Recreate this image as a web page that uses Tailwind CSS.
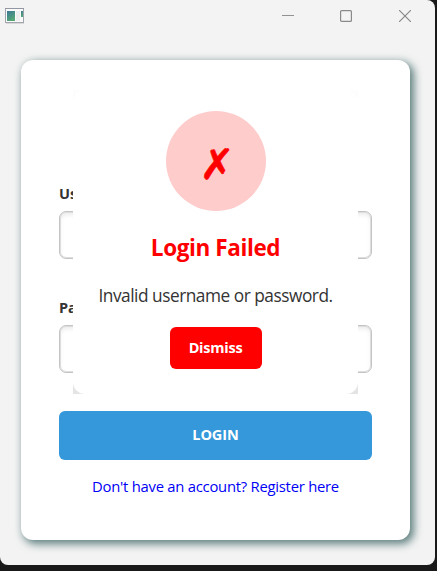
<!DOCTYPE html>
<html lang="en">
<head>
<meta charset="utf-8">
<title>Login</title>
<script src="https://cdn.jsdelivr.net/npm/@tailwindcss/browser@4"></script>
</head>
<body class="w-[437px] h-[571px] overflow-hidden bg-[#191919] font-['Open_Sans','Noto_Sans',sans-serif]">
<div class="w-[435px] h-[565px] rounded-tr-[8px] rounded-b-[8px] bg-[#f3f3f3] overflow-hidden">
  <header class="h-[32px] flex items-center justify-between pl-[5px] pr-[24px]">
    <svg class="w-[19px] h-[16px]" viewBox="0 0 19 16">
      <rect x=".5" y=".5" width="18" height="14" fill="#fafafa" stroke="#a2a5ad"/>
      <path d="M0 .5h19" stroke="#9297a3"/>
      <path d="M1 15.5h18" stroke="#d8d8d8"/>
      <defs><linearGradient id="g" x2=".5" y2="1"><stop stop-color="#3c7898"/><stop offset="1" stop-color="#55a775"/></linearGradient></defs>
      <rect x="2" y="3" width="8" height="10" fill="url(#g)"/>
      <rect x="11" y="3" width="4" height="10" fill="#eeeeee"/>
      <rect x="16" y="3" width="2" height="6" fill="url(#g)"/>
    </svg>
    <div class="flex items-center gap-[46px]">
      <svg class="w-[12px] h-[12px]" viewBox="0 0 12 12"><path d="M0 5.5h12" stroke="#929292"/></svg>
      <svg class="w-[12px] h-[12px] mr-px" viewBox="0 0 12 12"><rect x=".6" y=".6" width="10.8" height="10.8" rx="1" fill="none" stroke="#8a8a8a" stroke-width="1.2"/></svg>
      <svg class="w-[12px] h-[12px]" viewBox="0 0 12 12"><path d="M0 0l12 12M12 0L0 12" stroke="#858585" stroke-width="1.1"/></svg>
    </div>
  </header>
  <main class="relative mt-[28px] ml-[21px] w-[389px] h-[480px] rounded-[12px] bg-white shadow-[3px_3px_9px_1px_#5f7f7f] px-[38px] pt-[124px]">
    <label class="block h-[20px] leading-[19px] mb-[7px] text-[14.5px] font-bold text-[#333]">Username</label>
    <div class="h-[48px] rounded-[7px] border border-[#c4c4c4] bg-white shadow-[inset_0_0_0_1px_#dedede,inset_0_3px_4px_#00000014]"></div>
    <label class="block h-[20px] leading-[19px] mt-[39px] mb-[7px] text-[14.5px] font-bold text-[#333]">Password</label>
    <div class="h-[48px] rounded-[7px] border border-[#c4c4c4] bg-white shadow-[inset_0_0_0_1px_#dedede,inset_0_3px_4px_#00000014]"></div>
    <button class="mt-[38px] w-full h-[49px] pb-[2px] rounded-[6px] bg-[#3598db] text-white text-[14.5px] tracking-[-0.1px] font-bold flex items-center justify-center">LOGIN</button>
    <a class="mt-[16px] block text-center leading-[20px] text-[14.8px] tracking-[-0.24px] whitespace-nowrap text-[#0000f5]">Don't have an account? Register here</a>

    <section class="absolute left-[52px] top-[30px] w-[285px] h-[304px] bg-[linear-gradient(#fdfdfd,#e4e4e4)]">
      <div class="h-full rounded-[12px] bg-white pt-[21px] flex flex-col items-center">
        <div class="size-[100px] pt-[7px] pl-[3px] rounded-full bg-[#ffcccc] flex items-center justify-center text-[#ff0000] text-[42px] leading-[42px] [-webkit-text-stroke:0.6px_#ff0000] font-['DejaVu_Sans',sans-serif]">✗</div>
        <h1 class="mt-[21px] h-[30px] leading-[31px] text-[22.5px] tracking-[-0.4px] font-bold text-[#ff0000] whitespace-nowrap">Login Failed</h1>
        <p class="mt-[22px] h-[24px] leading-[24px] text-[17.3px] tracking-[-0.48px] text-[#333] whitespace-nowrap">Invalid username or password.</p>
        <button class="mt-[19px] w-[92px] h-[42px] rounded-[6px] bg-[#ff0000] text-white text-[14.5px] tracking-[-0.25px] font-bold">Dismiss</button>
      </div>
    </section>
  </main>
</div>
</body>
</html>
